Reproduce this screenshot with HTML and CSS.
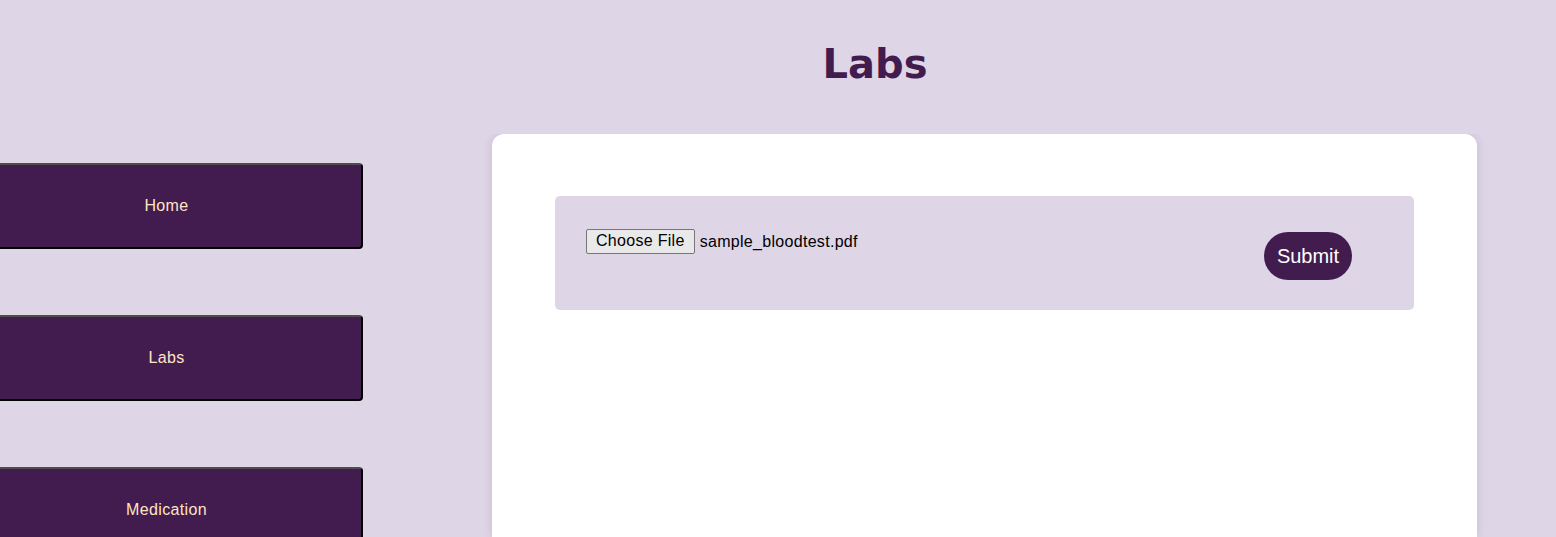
FILE: index.html
```html
<!DOCTYPE html>
<html>
<head>
<meta charset="utf-8">
<title>Labs</title>
<link rel="stylesheet" href="styles.css">
</head>
<body>
<header class="header">
  <h1 class="title">Labs</h1>
</header>
<div class="layout">
  <nav class="sidebar">
    <button class="nav-btn">Home</button>
    <button class="nav-btn">Labs</button>
    <button class="nav-btn">Medication</button>
  </nav>
  <main class="card">
    <form class="upload">
      <div class="file-field">
        <span class="file-btn">Choose File</span>
        <span class="file-name">sample_bloodtest.pdf</span>
      </div>
      <button type="button" class="submit">Submit</button>
    </form>
  </main>
</div>
</body>
</html>
```

FILE: styles.css
```css
html, body {
  margin: 0;
  padding: 0;
}
body {
  background: #ded5e7;
  font-family: "Liberation Sans", Arial, sans-serif;
  height: 537px;
  overflow: hidden;
}
.header {
  padding-left: 194px;
  padding-top: 39px;
}
.title {
  margin: 0;
  text-align: center;
  font-family: "DejaVu Sans", Verdana, sans-serif;
  font-weight: bold;
  font-size: 40px;
  line-height: 50px;
  color: #431c4f;
}
.layout {
  display: flex;
  align-items: flex-start;
  margin-top: 45px;
  height: 403px;
  overflow: hidden;
}
.sidebar {
  display: flex;
  flex-direction: column;
  gap: 66px;
  margin-left: -30px;
  padding-top: 29px;
  width: 393px;
  flex: none;
}
.nav-btn {
  width: 393px;
  height: 86px;
  flex: none;
  box-sizing: border-box;
  background: #431c4f;
  color: #ffe4c4;
  font-family: "Liberation Sans", Arial, sans-serif;
  font-size: 16px;
  letter-spacing: 0.35px;
  border-width: 2px;
  border-style: solid;
  border-color: #4d4d4d #000 #000 #4d4d4d;
  border-radius: 4px;
  padding: 0;
}
.card {
  margin-left: 129px;
  width: 985px;
  height: 403px;
  box-sizing: border-box;
  background: #fff;
  border-radius: 12px 12px 0 0;
  box-shadow: 0 0 10px rgba(80, 50, 100, 0.15);
  padding: 62px 63px;
  flex: none;
}
.upload {
  margin: 0;
  background: #ded5e7;
  border-radius: 5px;
  height: 114px;
  box-sizing: border-box;
  padding: 33px 62px 0 31px;
  display: flex;
  justify-content: space-between;
  align-items: flex-start;
}
.file-field {
  display: flex;
  align-items: center;
  font-size: 16px;
  color: #000;
  letter-spacing: 0.3px;
}
.file-btn {
  display: inline-block;
  height: 25px;
  box-sizing: border-box;
  line-height: 21px;
  padding: 0 9px;
  background: #e9e9e9;
  border: 1px solid #767676;
  border-radius: 2px;
  margin-right: 5px;
  font-size: 16px;
}
.file-name {
  font-size: 16px;
  line-height: 25px;
}
.submit {
  margin-top: 3px;
  width: 88px;
  height: 48px;
  border: none;
  border-radius: 24px;
  background: #431c4f;
  color: #fff;
  font-family: "Liberation Sans", Arial, sans-serif;
  font-size: 20px;
  padding: 0;
}
```
